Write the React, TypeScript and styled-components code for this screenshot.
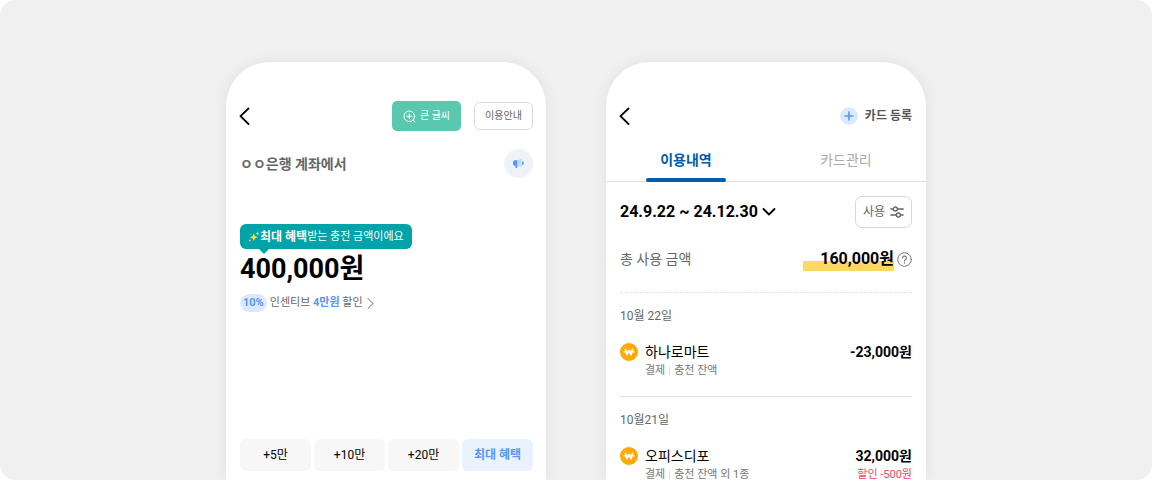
import React from "react";
import styled, { createGlobalStyle } from "styled-components";

const GlobalStyle = createGlobalStyle`
  *, *::before, *::after { box-sizing: border-box; }
  body {
    margin: 0;
    background: #ffffff;
    color: #000000;
    font-family: Roboto, "Noto Sans CJK KR", sans-serif;
  }
  button {
    margin: 0;
    padding: 0;
    border: 0;
    background: none;
    color: inherit;
    font: inherit;
    cursor: pointer;
  }
  h2, p, ul { margin: 0; padding: 0; font: inherit; list-style: none; }
  svg { display: block; flex: none; }
`;

const Stage = styled.main`
  display: flex;
  justify-content: center;
  gap: 60px;
  height: 100vh;
  padding-top: 62px;
  overflow: hidden;
  border-radius: 16px;
  background: #f0f0f0;
`;

const Phone = styled.section`
  flex: 0 1 320px;
  min-width: 0;
  padding-top: 39px;
  border-radius: 44px 44px 0 0;
  background: #ffffff;
  box-shadow: 0 0 14px rgba(0, 0, 0, 0.07);
`;

const Header = styled.header`
  display: flex;
  align-items: center;
  justify-content: space-between;
  height: 30px;
  padding: 0 14px 0 13px;
`;

const Actions = styled.div`
  display: flex;
  align-items: center;
  gap: 13px;
`;

const LargeTextButton = styled.button`
  display: flex;
  align-items: center;
  justify-content: center;
  gap: 4px;
  width: 69px;
  height: 30px;
  border-radius: 5px;
  background: #5ac8ae;
  color: #ffffff;
  font-size: 10px;
  line-height: 16px;
`;

const GuideButton = styled.button`
  width: 59px;
  height: 28px;
  border: 1px solid #dddddd;
  border-radius: 6px;
  color: #666666;
  font-size: 10px;
  line-height: 16px;
`;

const ChargeHeader = styled(Header)`
  padding-right: 13px;
`;

const ChargeBody = styled.div`
  display: flex;
  flex-direction: column;
  align-items: stretch;
  padding: 18px 13px 0 14px;
`;

const Account = styled.div`
  display: flex;
  align-items: center;
  justify-content: space-between;
  height: 29px;
  color: #666666;
  font-size: 14px;
  font-weight: 700;
  line-height: 20px;
`;

const NoticeButton = styled.button`
  display: grid;
  place-items: center;
  width: 29px;
  height: 29px;
  border-radius: 50%;
  background: #eff3f9;
`;

const Bubble = styled.p`
  position: relative;
  display: flex;
  align-items: center;
  align-self: flex-start;
  height: 25px;
  margin-top: 46px;
  padding: 0 8px;
  border-radius: 6px;
  background: #00a3a8;
  color: #ffffff;
  font-size: 11px;
  line-height: 16px;
  white-space: nowrap;

  strong { font-size: 12px; }

  &::after {
    content: "";
    position: absolute;
    top: 100%;
    left: 19px;
    border: solid transparent;
    border-width: 5px 5px 0;
    border-top-color: #00a3a8;
  }
`;

const ChargeAmount = styled.p`
  margin-top: 2px;
  font-size: 27px;
  font-weight: 700;
  line-height: 36px;
`;

const Incentive = styled.button`
  display: flex;
  align-items: center;
  align-self: flex-start;
  gap: 3px;
  height: 18px;
  margin-top: 7px;
  color: #666666;
  font-size: 11px;
  line-height: 18px;
  white-space: nowrap;

  strong { color: #5598f5; }
`;

const Rate = styled.strong`
  padding: 0 3px;
  border-radius: 9px;
  background: #dce9fd;
`;

const Presets = styled.div`
  display: grid;
  grid-template-columns: repeat(4, 1fr);
  gap: 3px;
  margin-top: 127px;
`;

const Preset = styled.button<{ $best?: boolean }>`
  height: 32px;
  border-radius: 6px;
  background: ${(p) => (p.$best ? "#eaf2fe" : "#f7f7f7")};
  color: ${(p) => (p.$best ? "#5598f5" : "#000000")};
  font-size: 12px;
  font-weight: ${(p) => (p.$best ? 700 : 400)};
  line-height: 16px;
`;

const AddCard = styled.button`
  display: flex;
  align-items: center;
  gap: 7px;
  color: #555555;
  font-size: 12px;
  font-weight: 700;
  line-height: 18px;
`;

const Tabs = styled.div`
  display: grid;
  grid-template-columns: 1fr 1fr;
  height: 51px;
  border-bottom: 1px solid #dddddd;
`;

const Tab = styled.button<{ $active?: boolean }>`
  position: relative;
  padding-top: 8px;
  color: ${(p) => (p.$active ? "#005bac" : "#aaaaaa")};
  font-size: 14px;
  font-weight: ${(p) => (p.$active ? 700 : 400)};
  line-height: 20px;

  &::after {
    content: "";
    position: absolute;
    bottom: -1px;
    left: 25%;
    width: 50%;
    height: 4px;
    border-radius: 2px;
    background: ${(p) => (p.$active ? "#005bac" : "transparent")};
  }
`;

const History = styled.div`
  padding: 14px 14px 0;
`;

const Row = styled.div`
  display: flex;
  align-items: center;
  justify-content: space-between;
`;

const Period = styled.button`
  display: flex;
  align-items: center;
  gap: 4px;
  font-size: 16px;
  font-weight: 700;
  line-height: 20px;
`;

const FilterButton = styled.button`
  display: flex;
  align-items: center;
  justify-content: center;
  gap: 5px;
  width: 57px;
  height: 32px;
  border: 1px solid #d8d8d8;
  border-radius: 7px;
  color: #666666;
  font-size: 12px;
  line-height: 16px;
`;

const Total = styled(Row)`
  height: 65px;
  padding-bottom: 2px;
  border-bottom: 1px dashed #e2e2e2;
  color: #666666;
  font-size: 14px;
  line-height: 20px;
`;

const TotalValue = styled.span`
  display: flex;
  align-items: center;
  gap: 3px;
`;

const Highlight = styled.strong`
  padding-left: 17px;
  background: linear-gradient(#ffd95e, #ffd95e) 0 100% / 100% 10px no-repeat;
  color: #000000;
  font-size: 16px;
  line-height: 24px;
`;

const Day = styled.section`
  padding: 13px 0 16px;

  & + & { border-top: 1px solid #e2e2e2; }
`;

const DayTitle = styled.h2`
  margin-bottom: 16px;
  color: #666666;
  font-size: 12px;
  line-height: 20px;
`;

const Entry = styled.div`
  display: grid;
  grid-template-columns: 18px 1fr auto;
  column-gap: 7px;
`;

const CoinCell = styled.span`
  padding-top: 1px;
`;

const Name = styled.p`
  font-size: 14px;
  line-height: 20px;
`;

const Detail = styled.p`
  display: flex;
  align-items: center;
  gap: 4px;
  color: #777777;
  font-size: 11px;
  line-height: 18px;
`;

const Bar = styled.span`
  width: 1px;
  height: 8px;
  background: #dddddd;
`;

const Price = styled.p`
  font-size: 14px;
  font-weight: 700;
  line-height: 20px;
  text-align: right;
`;

const Discount = styled.p`
  color: #f5455c;
  font-size: 11px;
  line-height: 18px;
  text-align: right;
`;

const BackIcon = () => (
  <svg width="12" height="18" viewBox="0 0 12 18" fill="none" stroke="#000" strokeWidth="1.8" strokeLinecap="round" strokeLinejoin="round">
    <path d="M9.500 1.500 1.500 9.200 9.500 17" />
  </svg>
);

const ZoomTextIcon = () => (
  <svg width="13" height="13" viewBox="0 0 13 13" fill="none" stroke="#fff" strokeLinecap="round">
    <circle cx="6.3" cy="6.3" r="5.3" />
    <path d="M6.3 3.9v4.8M3.9 6.3h4.8M10.1 10.1l1.9 1.9" />
  </svg>
);

const MegaphoneIcon = () => (
  <svg width="11" height="11" viewBox="0 0 11 11">
    <path d="M3.5 2.4 8.6.7v8.6L3.5 7.8z" fill="#c2dafc" />
    <path d="M2.4 2.3h1.8V10H2.4V7.8A2.75 2.75 0 0 1 2.4 2.3z" fill="#5598f5" />
    <path d="M9 3.2a1.9 1.9 0 0 1 0 3.8z" fill="#5598f5" />
  </svg>
);

const SparkleIcon = () => (
  <svg width="12" height="12" viewBox="0 0 12 12" fill="#ffdf3d">
    <path d="M5.8 2.2 6.9 5l2.9 1.2L6.9 7.4 5.8 10.2 4.7 7.4 1.9 6.2 4.7 5z" />
    <path d="M9.5.5l.6 1.5 1.5.6-1.5.6-.6 1.5-.6-1.5-1.5-.6 1.5-.6z" fill="#c4e36b" />
    <circle cx="1.9" cy="9.6" r="1" fill="#f8b850" />
    <circle cx="2" cy="3.3" r=".5" />
  </svg>
);

const MoreIcon = () => (
  <svg width="8" height="12" viewBox="0 0 8 12" fill="none" stroke="#666" strokeLinecap="round" strokeLinejoin="round">
    <path d="M2 1.500 7 6.500l-5 5" />
  </svg>
);

const PlusIcon = () => (
  <svg width="18" height="18" viewBox="0 0 18 18">
    <circle cx="9" cy="9" r="9" fill="#dce9fd" />
    <path d="M9 5v8M5 9h8" stroke="#5598f5" strokeWidth="1.6" strokeLinecap="round" />
  </svg>
);

const ChevronDownIcon = () => (
  <svg width="14" height="10" viewBox="0 0 14 10" fill="none" stroke="#000" strokeWidth="1.8" strokeLinecap="round" strokeLinejoin="round">
    <path d="M1.500 2 7 7.500 12.500 2" />
  </svg>
);

const SlidersIcon = () => (
  <svg width="14" height="12" viewBox="0 0 14 12" fill="none" stroke="#666" strokeWidth="1.3" strokeLinecap="round">
    <path d="M.8 3h2.500M7.500 3h5.700M.8 9h5.400M10.600 9h2.600" />
    <circle cx="5.4" cy="3" r="2" />
    <circle cx="8.4" cy="9" r="2" />
  </svg>
);

const HelpIcon = () => (
  <svg width="15" height="15" viewBox="0 0 15 15" fill="none" stroke="#777" strokeLinecap="round">
    <circle cx="7.5" cy="7.5" r="6.8" />
    <path d="M5.600 6a1.900 1.900 0 1 1 3 1.500c-.7.5-1.100.8-1.100 1.600" strokeWidth="1.2" />
    <circle cx="7.5" cy="11" r=".75" fill="#777" stroke="none" />
  </svg>
);

const CoinIcon = () => (
  <svg width="18" height="18" viewBox="0 0 18 18" fill="none" stroke="#fff" strokeLinecap="round" strokeLinejoin="round">
    <circle cx="9" cy="9" r="9" fill="#ffa800" stroke="none" />
    <path d="M5.500 6.300 7 11.600 9 7.300l2 4.300 1.500-5.300" strokeWidth="1.7" />
    <path d="M3.700 8.800h10.600" strokeWidth="1.2" />
  </svg>
);

type Payment = {
  day: string;
  name: string;
  method: string;
  price: string;
  discount?: string;
};

const payments: Payment[] = [
  { day: "10월 22일", name: "하나로마트", method: "충전 잔액", price: "-23,000원" },
  { day: "10월21일", name: "오피스디포", method: "충전 잔액 외 1종", price: "32,000원", discount: "할인 -500원" },
];

const ChargeScreen = () => (
  <Phone>
    <ChargeHeader>
      <button type="button" aria-label="뒤로"><BackIcon /></button>
      <Actions>
        <LargeTextButton type="button"><ZoomTextIcon />큰 글씨</LargeTextButton>
        <GuideButton type="button">이용안내</GuideButton>
      </Actions>
    </ChargeHeader>
    <ChargeBody>
      <Account>
        <span>ㅇㅇ은행 계좌에서</span>
        <NoticeButton type="button" aria-label="알림"><MegaphoneIcon /></NoticeButton>
      </Account>
      <Bubble><SparkleIcon /><strong>최대 혜택</strong>받는 충전 금액이에요</Bubble>
      <ChargeAmount>400,000원</ChargeAmount>
      <Incentive type="button">
        <Rate>10%</Rate>
        <span>인센티브 <strong>4만원</strong> 할인</span>
        <MoreIcon />
      </Incentive>
      <Presets>
        <Preset type="button">+5만</Preset>
        <Preset type="button">+10만</Preset>
        <Preset type="button">+20만</Preset>
        <Preset type="button" $best>최대 혜택</Preset>
      </Presets>
    </ChargeBody>
  </Phone>
);

const HistoryScreen = () => (
  <Phone>
    <Header>
      <button type="button" aria-label="뒤로"><BackIcon /></button>
      <AddCard type="button"><PlusIcon />카드 등록</AddCard>
    </Header>
    <Tabs role="tablist">
      <Tab type="button" role="tab" aria-selected="true" $active>이용내역</Tab>
      <Tab type="button" role="tab" aria-selected="false">카드관리</Tab>
    </Tabs>
    <History>
      <Row>
        <Period type="button">24.9.22 ~ 24.12.30<ChevronDownIcon /></Period>
        <FilterButton type="button">사용<SlidersIcon /></FilterButton>
      </Row>
      <Total>
        <span>총 사용 금액</span>
        <TotalValue>
          <Highlight>160,000원</Highlight>
          <button type="button" aria-label="도움말"><HelpIcon /></button>
        </TotalValue>
      </Total>
      {payments.map((p) => (
        <Day key={p.day}>
          <DayTitle>{p.day}</DayTitle>
          <Entry>
            <CoinCell><CoinIcon /></CoinCell>
            <div>
              <Name>{p.name}</Name>
              <Detail><span>결제</span><Bar /><span>{p.method}</span></Detail>
            </div>
            <div>
              <Price>{p.price}</Price>
              {p.discount && <Discount>{p.discount}</Discount>}
            </div>
          </Entry>
        </Day>
      ))}
    </History>
  </Phone>
);

export default function App() {
  return (
    <>
      <GlobalStyle />
      <Stage>
        <ChargeScreen />
        <HistoryScreen />
      </Stage>
    </>
  );
}
